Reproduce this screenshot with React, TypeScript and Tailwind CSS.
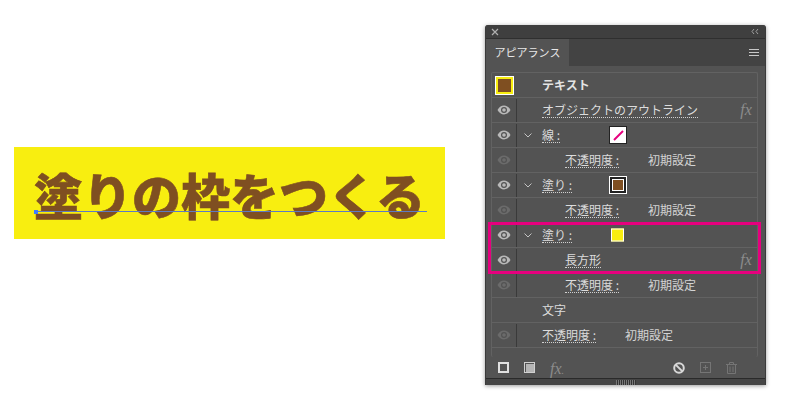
import React from "react";

const jp = "font-['Noto_Sans_CJK_JP','Noto_Sans',sans-serif]";

function Eye({ dim }: { dim?: boolean }) {
  const c = dim ? "#6b6b6b" : "#b9b9b9";
  return (
    <svg width="14" height="10" viewBox="0 0 14 10">
      <path d="M0.5 5C2.2 2 4.4 0.6 7 0.6S11.8 2 13.5 5C11.8 8 9.6 9.4 7 9.4S2.2 8 0.5 5Z" fill={c} />
      <circle cx="7" cy="5" r="3" fill="#535353" />
      <circle cx="7" cy="5" r="1.8" fill={c} />
    </svg>
  );
}

function Chevron() {
  return (
    <svg width="8" height="5" viewBox="0 0 8 5" fill="none" stroke="#c4c4c4" strokeWidth="1">
      <path d="M0.5 0.5L4 4L7.5 0.5" />
    </svg>
  );
}

function Fx({ small }: { small?: boolean }) {
  return (
    <span className="font-['Liberation_Serif',serif] text-[16px] italic leading-none text-[#8c8c8c]">
      fx{small && <span className="text-[10px]">.</span>}
    </span>
  );
}

function Label({ children }: { children: React.ReactNode }) {
  return (
    <span className="border-b border-dotted border-[#d0d0d0] text-[12px] leading-[14px] text-[#dcdcdc]">
      {children}
    </span>
  );
}

type RowProps = {
  eye?: "on" | "dim" | "none";
  chevron?: boolean;
  indent?: number;
  children?: React.ReactNode;
  fx?: boolean;
};

function Row({ eye = "none", chevron, indent = 25, children, fx }: RowProps) {
  return (
    <div className="flex h-[25px] items-center border-b border-[#626262]">
      <div className={`flex h-[23px] w-[25px] shrink-0 items-center justify-center ${eye !== "none" ? "border-r border-[#3a3a3a]" : ""}`}>
        {eye !== "none" && <Eye dim={eye === "dim"} />}
      </div>
      <div className="flex w-[25px] shrink-0 justify-center pr-[3px]">{chevron && <Chevron />}</div>
      <div className={`flex min-w-0 flex-1 items-center ${jp}`} style={{ paddingLeft: indent - 25 }}>
        {children}
      </div>
      {fx && (
        <div className="mr-[5px] flex w-[12px] justify-center">
          <Fx />
        </div>
      )}
    </div>
  );
}

function Opacity({ gap = 29 }: { gap?: number }) {
  return (
    <>
      <Label>不透明度 :</Label>
      <span className="text-[12px] text-[#d4d4d4]" style={{ marginLeft: gap }}>
        初期設定
      </span>
    </>
  );
}

function SwatchRow({ label, swatch, left }: { label: string; swatch: React.ReactNode; left: number }) {
  return (
    <Row eye="on" chevron>
      <div className="relative flex h-[23px] w-full items-center">
        <Label>{label}</Label>
        <div className="absolute top-1/2 -translate-y-1/2" style={{ left }}>
          {swatch}
        </div>
      </div>
    </Row>
  );
}

function FooterIcons() {
  return (
    <div className="flex h-[21px] items-center pl-[12px] pr-[28px]">
      <div className="h-[11px] w-[11px] border-2 border-[#e0e0e0]" />
      <div className="ml-[15px] flex h-[11px] w-[11px] items-center justify-center border border-[#d0d0d0]">
        <div className="h-[8px] w-[8px] bg-[#b5b5b5]" />
      </div>
      <div className="ml-[15px]">
        <Fx small />
      </div>
      <div className="ml-auto flex items-center gap-[15px]">
        <svg width="12" height="12" viewBox="0 0 12 12" fill="none" stroke="#d8d8d8" strokeWidth="2">
          <circle cx="6" cy="6" r="4.8" />
          <path d="M2.6 2.6L9.4 9.4" />
        </svg>
        <svg width="11" height="11" viewBox="0 0 11 11" fill="none" stroke="#757575" strokeWidth="1">
          <rect x="0.5" y="0.5" width="10" height="10" />
          <path d="M5.5 3V8M3 5.5H8" />
        </svg>
        <svg width="11" height="12" viewBox="0 0 11 12" fill="none" stroke="#757575" strokeWidth="1">
          <path d="M0 2.5H11M3.5 2.5V0.5H7.5V2.5M1.5 2.5V11.5H9.5V2.5M4 4.5V10M7 4.5V10" />
        </svg>
      </div>
    </div>
  );
}

function AppearancePanel() {
  return (
    <div className="flex h-[360px] w-[281px] flex-col overflow-hidden rounded-t-[3px] border-x border-[#3a3a3a] bg-[#535353] shadow-[0_1px_4px_rgba(0,0,0,0.4)]">
      <div className="flex h-[13px] shrink-0 items-center justify-between bg-[#3f3f3f] pl-[5px] pr-[6px]">
        <svg width="8" height="8" viewBox="0 0 8 8" stroke="#b0b0b0" strokeWidth="1.2">
          <path d="M1 1L7 7M7 1L1 7" />
        </svg>
        <svg width="8" height="7" viewBox="0 0 8 7" fill="none" stroke="#a0a0a0" strokeWidth="1">
          <path d="M3 1L1 3.5L3 6M7 1L5 3.5L7 6" />
        </svg>
      </div>
      <div className="flex h-[28px] shrink-0 items-stretch justify-between border-t border-[#2f2f2f] bg-[#434343]">
        <div className={`flex w-[83px] items-center justify-center bg-[#535353] text-[11px] text-[#e8e8e8] ${jp}`}>
          アピアランス
        </div>
        <div className="mr-[6px] flex flex-col justify-center gap-[2px]">
          <div className="h-px w-[10px] bg-[#c8c8c8]" />
          <div className="h-px w-[10px] bg-[#c8c8c8]" />
          <div className="h-px w-[10px] bg-[#c8c8c8]" />
        </div>
      </div>
      <div className="ml-[5px] mr-[7px] mt-[6px] h-[285px] shrink-0 rounded-[2px] border-x border-t border-[#626262]">
        <div className="flex h-[25px] items-center border-b border-[#626262]">
          <div className="ml-[3px] flex h-[19px] w-[19px] items-center justify-center border border-white bg-[#f8ee10]">
            <div className="h-[13px] w-[13px] bg-[#7f4f21]" />
          </div>
          <span className={`ml-[28px] text-[12px] font-bold text-[#e4e4e4] ${jp}`}>テキスト</span>
        </div>
        <Row eye="on" fx>
          <Label>オブジェクトのアウトライン</Label>
        </Row>
        <SwatchRow
          label="線 :"
          left={67}
          swatch={
            <div className="flex h-[18px] w-[18px] items-center justify-center border border-[#222] bg-white">
              <svg width="11" height="11" viewBox="0 0 11 11" stroke="#e6007e" strokeWidth="2">
                <path d="M1 10L10 1" />
              </svg>
            </div>
          }
        />
        <Row eye="dim" indent={48}>
          <Opacity />
        </Row>
        <SwatchRow
          label="塗り :"
          left={67}
          swatch={
            <div className="flex h-[18px] w-[18px] items-center justify-center border border-white bg-[#222]">
              <div className="box-content h-[10px] w-[10px] border border-white bg-[#7f4f21]" />
            </div>
          }
        />
        <Row eye="dim" indent={48}>
          <Opacity />
        </Row>
        <div className="relative">
          <SwatchRow
            label="塗り :"
            left={69}
            swatch={<div className="h-[13px] w-[13px] border border-white bg-[#f8ee10]" />}
          />
          <Row eye="on" indent={48} fx>
            <Label>長方形</Label>
          </Row>
          <div className="absolute -bottom-[1px] -left-[4px] -right-[4px] -top-[1px] border-[3px] border-[#e6007e]" />
        </div>
        <Row eye="dim" indent={48}>
          <Opacity />
        </Row>
        <Row>
          <span className="text-[12px] text-[#dcdcdc]">文字</span>
        </Row>
        <Row eye="dim">
          <Opacity />
        </Row>
      </div>
      <FooterIcons />
      <div className="flex h-[8px] shrink-0 items-center justify-center border-t border-[#2a2a2a] bg-[#454545]">
        <div className="h-[5px] w-[20px] bg-[repeating-linear-gradient(90deg,#777_0,#777_1px,#333_1px,#333_2px)]" />
      </div>
    </div>
  );
}

function Artwork() {
  return (
    <div className={`relative flex h-[92px] w-[431px] items-center bg-[#f8ee10] pl-[20px] ${jp}`}>
      <span className="whitespace-nowrap text-[49px] font-black leading-none text-[#7f4f21] [-webkit-text-stroke:0.6px_#7f4f21]">
        塗りの枠をつくる
      </span>
      <div className="absolute left-[21px] top-[64px] h-px w-[392px] bg-[#5d7ac4]" />
      <div className="absolute left-[20px] top-[63px] h-[4px] w-[4px] bg-[#3f7cff]" />
    </div>
  );
}

export default function App() {
  return (
    <div className="flex h-[412px] w-[785px] items-start bg-white">
      <div className="ml-[14px] mt-[147px]">
        <Artwork />
      </div>
      <div className="ml-[40px] mt-[25px]">
        <AppearancePanel />
      </div>
    </div>
  );
}
